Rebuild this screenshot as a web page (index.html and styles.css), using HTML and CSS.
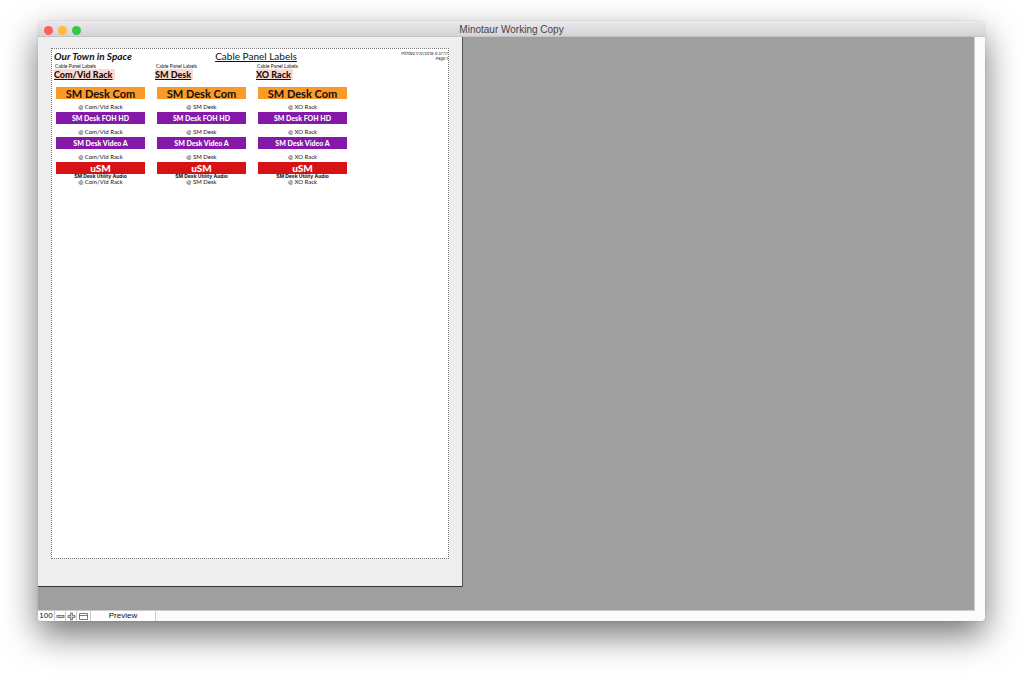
FILE: index.html
```html
<!DOCTYPE html>
<html lang="en">
  <head>
    <meta charset="UTF-8" />
    <meta name="viewport" content="width=device-width, initial-scale=1.0" />
    <title>Minotaur Working Copy</title>
    <link rel="stylesheet" href="styles.css">
  </head>

  <body>
    <div class="window">
      <header class="titlebar">
        <div class="lights">
          <button class="light close" aria-label="Close"></button>
          <button class="light minimize" aria-label="Minimize"></button>
          <button class="light zoom" aria-label="Zoom"></button>
        </div>
        <h1>Minotaur Working Copy</h1>
      </header>

      <main class="viewport">
        <div class="paper">
          <div class="printable">
            <div class="page-header">
              <h2 class="show">Our Town in Space</h2>
              <h2 class="report">Cable Panel Labels</h2>
              <p class="printed">Printed 1/12/2018 4:37:17<br>Page 1</p>
            </div>
            <div class="columns">
              <section class="column">
                <p class="kind">Cable Panel Labels</p>
                <h3><span>Com/Vid Rack</span></h3>
                <div class="label com"><p class="bar">SM Desk Com</p><p class="sub"></p><p class="place">@ Com/Vid Rack</p></div>
                <div class="label video"><p class="bar">SM Desk FOH HD</p><p class="sub"></p><p class="place">@ Com/Vid Rack</p></div>
                <div class="label video"><p class="bar">SM Desk Video A</p><p class="sub"></p><p class="place">@ Com/Vid Rack</p></div>
                <div class="label audio"><p class="bar">uSM</p><p class="sub">SM Desk Utility Audio</p><p class="place">@ Com/Vid Rack</p></div>
              </section>
              <section class="column">
                <p class="kind">Cable Panel Labels</p>
                <h3><span>SM Desk</span></h3>
                <div class="label com"><p class="bar">SM Desk Com</p><p class="sub"></p><p class="place">@ SM Desk</p></div>
                <div class="label video"><p class="bar">SM Desk FOH HD</p><p class="sub"></p><p class="place">@ SM Desk</p></div>
                <div class="label video"><p class="bar">SM Desk Video A</p><p class="sub"></p><p class="place">@ SM Desk</p></div>
                <div class="label audio"><p class="bar">uSM</p><p class="sub">SM Desk Utility Audio</p><p class="place">@ SM Desk</p></div>
              </section>
              <section class="column">
                <p class="kind">Cable Panel Labels</p>
                <h3><span>XO Rack</span></h3>
                <div class="label com"><p class="bar">SM Desk Com</p><p class="sub"></p><p class="place">@ XO Rack</p></div>
                <div class="label video"><p class="bar">SM Desk FOH HD</p><p class="sub"></p><p class="place">@ XO Rack</p></div>
                <div class="label video"><p class="bar">SM Desk Video A</p><p class="sub"></p><p class="place">@ XO Rack</p></div>
                <div class="label audio"><p class="bar">uSM</p><p class="sub">SM Desk Utility Audio</p><p class="place">@ XO Rack</p></div>
              </section>
            </div>
          </div>
        </div>
      </main>

      <footer class="statusbar">
        <button class="percent">100</button>
        <button class="tool" aria-label="Zoom out">
          <svg width="9" height="9" viewBox="0 0 9 9"><rect x="1" y="3.5" width="7" height="2" fill="#ccc" stroke="#666" stroke-width=".8"/></svg>
        </button>
        <button class="tool" aria-label="Zoom in">
          <svg width="9" height="9" viewBox="0 0 9 9"><path d="M3.500 1h2v2.500h2.500v2h-2.500v2.500h-2v-2.500h-2.500v-2h2.500z" fill="#ccc" stroke="#666" stroke-width=".8"/></svg>
        </button>
        <button class="tool wide" aria-label="Status toolbar">
          <svg width="9" height="9" viewBox="0 0 9 9"><path d="M.5 1.500h8v6h-8zM.5 3.500h8" fill="none" stroke="#777"/></svg>
        </button>
        <button class="mode">Preview</button>
      </footer>
    </div>
  </body>
</html>
```
FILE: styles.css
```css
* {
  margin: 0;
  padding: 0;
  box-sizing: border-box;
}

body {
  min-height: 100vh;
  display: flex;
  padding: 21px 39px 55px 38px;
  background-color: white;
  font-family: Lato, "Liberation Sans", sans-serif;
  color: #111;
  overflow: hidden;
}

button {
  border: 0;
  background: none;
  font-family: "Liberation Sans", sans-serif;
  color: #111;
}

.window {
  flex: 1;
  display: flex;
  flex-direction: column;
  border-radius: 5px 5px 3px 3px;
  background-color: #fbfbfb;
  box-shadow: 0 0 1px rgba(0, 0, 0, 0.4), 0 14px 34px rgba(0, 0, 0, 0.55);
}

.titlebar {
  display: grid;
  grid-template-columns: 1fr auto 1fr;
  align-items: center;
  height: 16px;
  padding: 2px 6px 0;
  border-radius: 5px 5px 0 0;
  border-bottom: 1px solid #c4c4c4;
  background: linear-gradient(#ebe9eb, #d4d2d4);
}

.titlebar h1 {
  grid-column: 2;
  font: 10px/14px "Liberation Sans", sans-serif;
  color: #444;
}

.lights {
  display: flex;
  gap: 5px;
}

.light {
  width: 9px;
  height: 9px;
  border-radius: 50%;
}

.close {
  background-color: #fc605b;
}

.minimize {
  background-color: #fdbc40;
}

.zoom {
  background-color: #34c84a;
}

.viewport {
  flex: 1;
  margin-right: 10px;
  border-right: 1px solid #ccc;
  border-bottom: 1px solid #ccc;
  background-color: #9f9f9f;
}

.paper {
  width: 425px;
  height: 550px;
  padding: 11px 13px 27px;
  border-right: 1px solid #555;
  border-bottom: 1px solid #333;
  background-color: #eee;
}

.printable {
  height: 100%;
  padding: 2px 0 0 2px;
  border: 1px dotted #777;
  background-color: white;
}

.page-header {
  display: grid;
  grid-template-columns: 1fr auto 1fr;
  height: 13px;
}

.show {
  font-size: 10px;
  line-height: 10px;
  font-style: italic;
  font-weight: 700;
}

.report {
  padding-left: 10px;
  font-size: 10px;
  line-height: 10px;
  font-weight: 400;
  text-decoration: underline;
}

.printed {
  font-family: Inter, sans-serif;
  font-size: 4px;
  line-height: 5px;
  text-align: right;
}

.columns {
  display: flex;
}

.column {
  width: 101px;
}

.kind {
  padding-left: 1px;
  font-size: 5px;
  line-height: 5px;
}

h3 {
  height: 18px;
  font-size: 9px;
  line-height: 11px;
  font-weight: 900;
}

h3 span {
  display: inline-block;
  padding-right: 2px;
  background-color: #fbd9d0;
  text-decoration: underline;
}

.label {
  width: 89px;
  height: 25px;
  margin-left: 2px;
  text-align: center;
}

.bar {
  height: 12px;
  font-size: 7px;
  line-height: 13px;
  font-weight: 900;
  color: white;
}

.com .bar {
  background-color: #fb9a28;
  font-size: 11px;
  font-weight: 700;
  color: #111;
}

.video .bar {
  background-color: #8518a9;
}

.audio .bar {
  background-color: #d61217;
  font-size: 10px;
}

.sub {
  height: 5px;
  font-family: Inter, sans-serif;
  font-size: 5px;
  line-height: 5px;
  font-weight: 700;
}

.place {
  font-size: 6px;
  line-height: 6px;
}

.statusbar {
  display: flex;
  height: 10px;
}

.statusbar button {
  display: flex;
  align-items: center;
  justify-content: center;
  height: 10px;
  border-right: 1px solid #ccc;
  background-color: white;
  font-size: 8px;
  line-height: 10px;
}

.statusbar .percent {
  width: 17px;
  border-bottom-left-radius: 3px;
}

.statusbar .tool {
  width: 11px;
}

.statusbar .wide {
  width: 14px;
}

.statusbar .mode {
  width: 65px;
}
```
